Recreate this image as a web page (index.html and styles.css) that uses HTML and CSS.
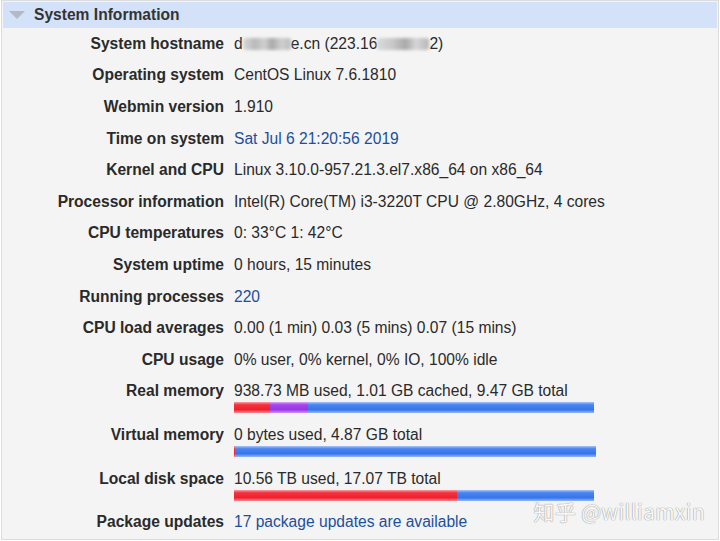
FILE: index.html
```html
<!DOCTYPE html>
<html>
<head>
<meta charset="utf-8">
<link rel="stylesheet" href="styles.css">
</head>
<body>
<div class="panel">
  <div class="head">
    <svg class="tri" width="16" height="8" viewBox="0 0 16 8"><polygon points="0,0 16,0 8,8" fill="#b4bac3"/></svg>
    <span class="title">System Information</span>
  </div>
  <div class="grid">
    <div class="lbl">System hostname</div>
    <div class="val">d<span class="blur b1"></span>e.cn (223.16<span class="blur b2"></span>2)</div>

    <div class="lbl">Operating system</div>
    <div class="val">CentOS Linux 7.6.1810</div>

    <div class="lbl">Webmin version</div>
    <div class="val">1.910</div>

    <div class="lbl">Time on system</div>
    <div class="val"><span class="link">Sat Jul 6 21:20:56 2019</span></div>

    <div class="lbl">Kernel and CPU</div>
    <div class="val">Linux 3.10.0-957.21.3.el7.x86_64 on x86_64</div>

    <div class="lbl">Processor information</div>
    <div class="val">Intel(R) Core(TM) i3-3220T CPU @ 2.80GHz, 4 cores</div>

    <div class="lbl">CPU temperatures</div>
    <div class="val">0: 33°C 1: 42°C</div>

    <div class="lbl">System uptime</div>
    <div class="val">0 hours, 15 minutes</div>

    <div class="lbl">Running processes</div>
    <div class="val"><span class="link">220</span></div>

    <div class="lbl">CPU load averages</div>
    <div class="val">0.00 (1 min) 0.03 (5 mins) 0.07 (15 mins)</div>

    <div class="lbl">CPU usage</div>
    <div class="val">0% user, 0% kernel, 0% IO, 100% idle</div>

    <div class="lbl barlbl">Real memory</div>
    <div class="val barval">938.73 MB used, 1.01 GB cached, 9.47 GB total
      <div class="bar"><span class="seg red" style="width:36px"></span><span class="seg purple" style="width:38px"></span><span class="seg blue"></span></div>
    </div>

    <div class="lbl barlbl">Virtual memory</div>
    <div class="val barval">0 bytes used, 4.87 GB total
      <div class="bar wide"><span class="seg red" style="width:1px"></span><span class="seg blue"></span></div>
    </div>

    <div class="lbl barlbl">Local disk space</div>
    <div class="val barval">10.56 TB used, 17.07 TB total
      <div class="bar"><span class="seg red" style="width:223px"></span><span class="seg blue"></span></div>
    </div>

    <div class="lbl">Package updates</div>
    <div class="val"><span class="link">17 package updates are available</span></div>
  </div>
  <div class="mark">知乎 @williamxin</div>
</div>
</body>
</html>
```

FILE: styles.css
```css
html, body {
  margin: 0;
  padding: 0;
  background: #ffffff;
}
body {
  font-family: "Liberation Sans", Arial, Helvetica, sans-serif;
  font-size: 15.6px;
  color: #2a2a2a;
}
.panel {
  position: relative;
  margin-left: 1px;
  width: 714px;
  height: 536px;
  border: 1px solid #dcdcdc;
  padding: 1px;
  background: #f4f4f4;
}
.head {
  height: 26px;
  background: #d3e2f8;
  display: flex;
  align-items: center;
}
.tri {
  margin-left: 6px;
  margin-right: 9px;
  margin-top: -1px;
}
.title {
  font-weight: bold;
  font-size: 15.6px;
  color: #333;
  margin-top: 0;
}
.grid {
  display: grid;
  grid-template-columns: 221px 1fr;
  column-gap: 10px;
}
.lbl {
  text-align: right;
  font-weight: bold;
  line-height: 18px;
  padding: 6.8px 0;
  white-space: nowrap;
}
.val {
  line-height: 18px;
  padding: 6.8px 0;
  white-space: nowrap;
}
.barlbl {
  padding-bottom: 0;
}
.barval {
  padding-bottom: 5.9px;
}
.link {
  color: #1d4f9c;
}
.blur {
  display: inline-block;
  height: 12px;
  vertical-align: -1px;
  border-radius: 3px;
  filter: blur(1.5px);
}
.b1 {
  width: 48px;
  background: linear-gradient(90deg, #d8d8d8 0%, #b9b9b9 25%, #d0d0d0 45%, #a9a9a9 60%, #cfcfcf 80%, #bdbdbd 100%);
}
.b2 {
  width: 52px;
  background: linear-gradient(90deg, #dadada 0%, #c8c8c8 30%, #a9a9a9 55%, #d6d6d6 75%, #b6b6b6 100%);
}
.bar {
  display: flex;
  width: 360px;
  height: 11px;
  margin-top: 2px;
}
.bar.wide {
  width: 362px;
}
.seg {
  display: block;
  height: 100%;
}
.red {
  background: linear-gradient(180deg, #f7a0a5 0%, #f2323e 25%, #f0202e 70%, #f58a90 100%);
}
.purple {
  background: linear-gradient(180deg, #d9a5f5 0%, #a646ea 25%, #9a36e6 70%, #cf93f2 100%);
}
.blue {
  flex: 1;
  background: linear-gradient(180deg, #a9c4f7 0%, #4a86f0 25%, #3574ec 70%, #98b8f4 100%);
}
.mark {
  position: absolute;
  right: 13px;
  bottom: 13px;
  font-family: "Noto Sans CJK SC", "Liberation Sans", sans-serif;
  font-size: 21px;
  color: rgba(255, 255, 255, 0.95);
  text-shadow: 0 0 1px #8f8f8f, 0 0 1px #a0a0a0;
  letter-spacing: 0.3px;
}
```
